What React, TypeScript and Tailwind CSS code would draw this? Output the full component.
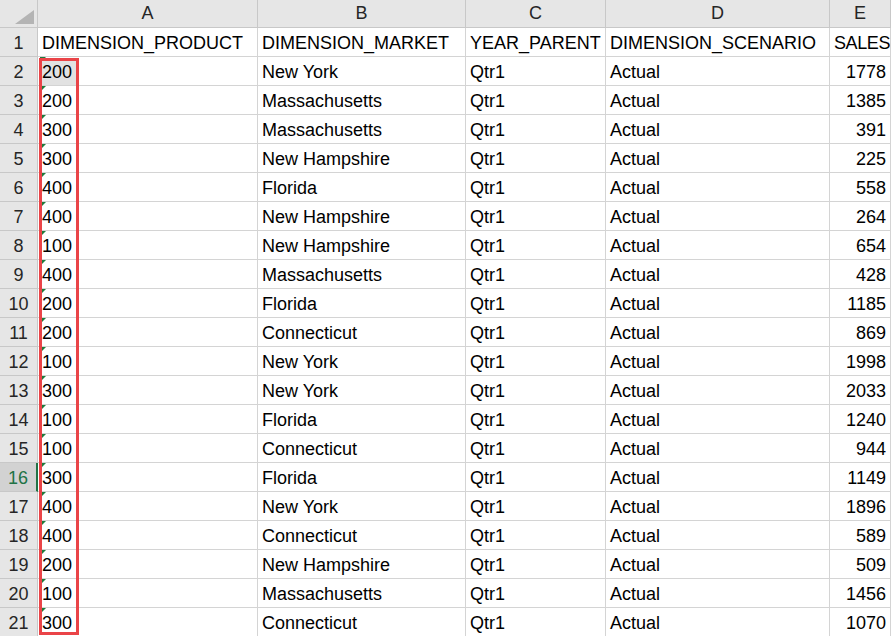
import React from "react";

const rows: [string, string, string, string, number][] = [
  ["200", "New York", "Qtr1", "Actual", 1778],
  ["200", "Massachusetts", "Qtr1", "Actual", 1385],
  ["300", "Massachusetts", "Qtr1", "Actual", 391],
  ["300", "New Hampshire", "Qtr1", "Actual", 225],
  ["400", "Florida", "Qtr1", "Actual", 558],
  ["400", "New Hampshire", "Qtr1", "Actual", 264],
  ["100", "New Hampshire", "Qtr1", "Actual", 654],
  ["400", "Massachusetts", "Qtr1", "Actual", 428],
  ["200", "Florida", "Qtr1", "Actual", 1185],
  ["200", "Connecticut", "Qtr1", "Actual", 869],
  ["100", "New York", "Qtr1", "Actual", 1998],
  ["300", "New York", "Qtr1", "Actual", 2033],
  ["100", "Florida", "Qtr1", "Actual", 1240],
  ["100", "Connecticut", "Qtr1", "Actual", 944],
  ["300", "Florida", "Qtr1", "Actual", 1149],
  ["400", "New York", "Qtr1", "Actual", 1896],
  ["400", "Connecticut", "Qtr1", "Actual", 589],
  ["200", "New Hampshire", "Qtr1", "Actual", 509],
  ["100", "Massachusetts", "Qtr1", "Actual", 1456],
  ["300", "Connecticut", "Qtr1", "Actual", 1070],
];

const cols = "grid grid-cols-[38px_220px_208px_140px_224px_61px]";
const cell = "h-[29px] border-r border-b border-[#d4d4d4] flex items-center pt-[2px] px-[4px] whitespace-nowrap overflow-hidden";
const rowHead = "h-[29px] border-r border-b border-[#c8c8c8] bg-[#e6e6e6] flex items-center justify-center pt-[2px] text-[#262626]";

function GreenTick() {
  return (
    <span className="absolute left-[2px] top-0 w-0 h-0 border-t-[6px] border-t-[#1e7a3c] border-r-[6px] border-r-transparent" />
  );
}

export default function App() {
  return (
    <div className="relative w-[891px] h-[636px] overflow-hidden bg-white text-black text-[18px] font-['Liberation_Sans',Arial,sans-serif]">
      <div className={cols}>
        <div className="relative h-[28px] border-r border-b border-[#c8c8c8] bg-[#e6e6e6]">
          <svg className="absolute left-0 top-0" width="37" height="27">
            <polygon points="34,10 34,24 15,24" fill="#b4b4b4" />
          </svg>
        </div>
        {["A", "B", "C", "D", "E"].map((l) => (
          <div
            key={l}
            className="h-[28px] border-r border-b border-[#c8c8c8] bg-[#e6e6e6] flex items-center justify-center text-[#262626]"
          >
            {l}
          </div>
        ))}

        <div className={rowHead}>1</div>
        <div className={cell}>DIMENSION_PRODUCT</div>
        <div className={cell}>DIMENSION_MARKET</div>
        <div className={cell}>YEAR_PARENT</div>
        <div className={cell}>DIMENSION_SCENARIO</div>
        <div className={cell + " px-[3px] tracking-[-0.4px]"}>SALES</div>

        {rows.map((r, i) => {
          const n = i + 2;
          const active = n === 16;
          return (
            <React.Fragment key={n}>
              <div
                className={
                  active
                    ? "h-[29px] border-r-2 border-r-[#217346] border-b border-b-[#c8c8c8] bg-[#d2d2d2] flex items-center justify-center pt-[2px] text-[#217346]"
                    : rowHead
                }
              >
                {n}
              </div>
              <div className={cell + " relative"}>
                {n === 2 && <span className="absolute left-[2px] top-[1px] w-[38px] h-[27px] bg-[#e2e2e2]" />}
                <GreenTick />
                <span className="relative">{r[0]}</span>
              </div>
              <div className={cell}>{r[1]}</div>
              <div className={cell}>{r[2]}</div>
              <div className={cell}>{r[3]}</div>
              <div className={cell + " justify-end"}>{r[4]}</div>
            </React.Fragment>
          );
        })}
      </div>

      {/* highlight drawn over column A */}
      <div className="absolute left-[39px] top-[58px] w-[40px] h-[577px] border-[3px] border-[#ea4448]" />
    </div>
  );
}
